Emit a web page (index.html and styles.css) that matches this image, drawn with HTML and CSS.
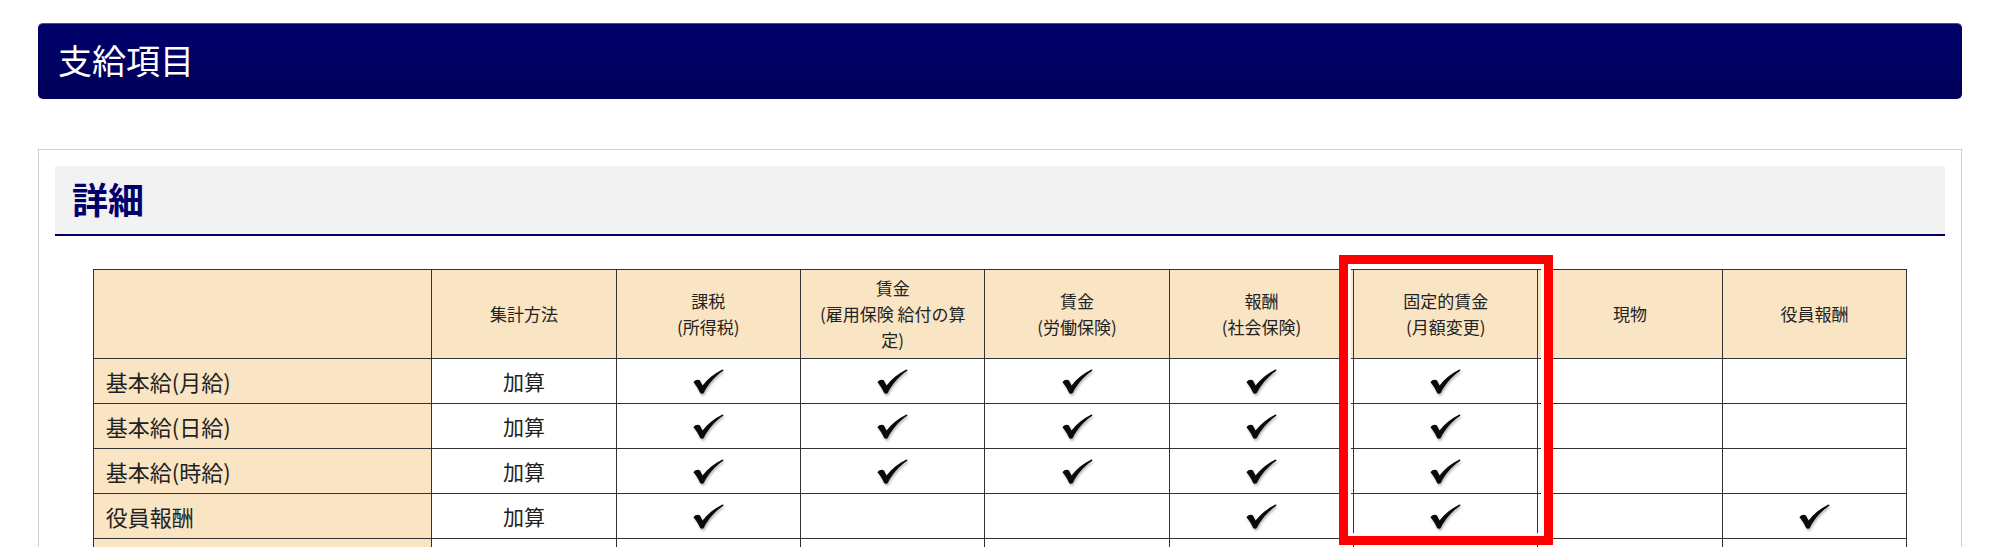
FILE: index.html
```html
<!DOCTYPE html>
<html lang="ja">
<head>
<meta charset="utf-8">
<title>支給項目</title>
<link rel="stylesheet" href="styles.css">
</head>
<body>
<svg class="defs" width="0" height="0" aria-hidden="true">
  <symbol id="chk" viewBox="0 0 32 26">
    <path d="M0.3 13.8 C2 11.2 5.2 10.6 7 11.8 L9.8 17.2 C15 10.5 22 4.8 30.5 0.6 C31.6 0.3 31.9 1.5 31 2.1 C22 8.5 15.5 16 11.2 24.6 C10.4 26 8 26 7.2 24.6 C5.2 20.2 3 16.8 0.3 13.8 Z"/>
  </symbol>
</svg>
<div class="page">
  <h1 class="banner">支給項目</h1>
  <section class="panel">
    <h2 class="sec-head">詳細</h2>
    <div class="table-wrap">
      <table class="grid">
        <colgroup>
          <col class="c-name">
          <col><col><col><col><col><col><col><col>
        </colgroup>
        <thead>
          <tr>
            <th></th>
            <th>集計方法</th>
            <th>課税<br>(所得税)</th>
            <th>賃金<br>(雇用保険 給付の算<br>定)</th>
            <th>賃金<br>(労働保険)</th>
            <th>報酬<br>(社会保険)</th>
            <th>固定的賃金<br>(月額変更)</th>
            <th>現物</th>
            <th>役員報酬</th>
          </tr>
        </thead>
        <tbody>
          <tr>
            <td class="name">基本給(月給)</td><td>加算</td>
            <td><svg class="ck"><use href="#chk"/></svg></td>
            <td><svg class="ck"><use href="#chk"/></svg></td>
            <td><svg class="ck"><use href="#chk"/></svg></td>
            <td><svg class="ck"><use href="#chk"/></svg></td>
            <td><svg class="ck"><use href="#chk"/></svg></td>
            <td></td><td></td>
          </tr>
          <tr>
            <td class="name">基本給(日給)</td><td>加算</td>
            <td><svg class="ck"><use href="#chk"/></svg></td>
            <td><svg class="ck"><use href="#chk"/></svg></td>
            <td><svg class="ck"><use href="#chk"/></svg></td>
            <td><svg class="ck"><use href="#chk"/></svg></td>
            <td><svg class="ck"><use href="#chk"/></svg></td>
            <td></td><td></td>
          </tr>
          <tr>
            <td class="name">基本給(時給)</td><td>加算</td>
            <td><svg class="ck"><use href="#chk"/></svg></td>
            <td><svg class="ck"><use href="#chk"/></svg></td>
            <td><svg class="ck"><use href="#chk"/></svg></td>
            <td><svg class="ck"><use href="#chk"/></svg></td>
            <td><svg class="ck"><use href="#chk"/></svg></td>
            <td></td><td></td>
          </tr>
          <tr>
            <td class="name">役員報酬</td><td>加算</td>
            <td><svg class="ck"><use href="#chk"/></svg></td>
            <td></td><td></td>
            <td><svg class="ck"><use href="#chk"/></svg></td>
            <td><svg class="ck"><use href="#chk"/></svg></td>
            <td></td>
            <td><svg class="ck"><use href="#chk"/></svg></td>
          </tr>
          <tr>
            <td class="name"></td><td></td>
            <td></td><td></td><td></td><td></td><td></td><td></td><td></td>
          </tr>
        </tbody>
      </table>
      <div class="mark" aria-hidden="true"></div>
    </div>
  </section>
</div>
</body>
</html>
```

FILE: styles.css
```css
html, body {
  margin: 0;
  padding: 0;
  background: #ffffff;
}

body {
  font-family: "Noto Sans CJK JP", "Noto Sans", sans-serif;
  color: #222222;
}

.defs {
  position: absolute;
  width: 0;
  height: 0;
  overflow: hidden;
}

.page {
  padding: 23px 38px 0 38px;
}

.banner {
  margin: 0;
  height: 76px;
  box-sizing: border-box;
  display: flex;
  align-items: center;
  padding: 0 0 5px 20px;
  border-radius: 5px;
  border-top: 1px solid #4a4a86;
  background: linear-gradient(#00006c, #000058);
  color: #ffffff;
  font-size: 34px;
  font-weight: 400;
}

.panel {
  margin-top: 50px;
  border: 1px solid #cfcfcf;
  padding: 16px 16px 40px 16px;
}

.sec-head {
  margin: 0;
  height: 70px;
  display: flex;
  align-items: center;
  padding: 0 0 5px 17px;
  box-sizing: border-box;
  background: #f2f2f2;
  border-bottom: 2px solid #00006a;
  color: #00006a;
  font-size: 36px;
  font-weight: 700;
}

.table-wrap {
  position: relative;
  width: 96%;
  margin: 33px auto 0 auto;
}

.grid {
  width: 100%;
  table-layout: fixed;
  border-collapse: collapse;
  border: 1px solid #333333;
}

.c-name {
  width: 18.67%;
}

.grid th,
.grid td {
  border: 1px solid #333333;
  text-align: center;
  vertical-align: middle;
}

.grid th {
  background: #f9e4c4;
  font-size: 17px;
  font-weight: 400;
  line-height: 26px;
  padding: 5px 8px;
  color: #222222;
}

.grid td {
  font-size: 21px;
  line-height: 26px;
  padding: 0 12px;
  height: 44px;
  background: #ffffff;
}

.grid td.name {
  text-align: left;
  background: #f9e4c4;
  font-size: 22px;
  padding-left: 12px;
}

.ck {
  display: block;
  margin: 0 auto;
  width: 31px;
  height: 25px;
  fill: #0a0a0a;
  filter: drop-shadow(1px 2px 1px rgba(0, 0, 0, 0.28));
}

.mark {
  position: absolute;
  left: 1246px;
  top: -14px;
  width: 214px;
  height: 290px;
  box-sizing: border-box;
  border: 9px solid #ff0000;
  box-shadow: inset 0 0 0 3px #ffffff;
  pointer-events: none;
}
```
